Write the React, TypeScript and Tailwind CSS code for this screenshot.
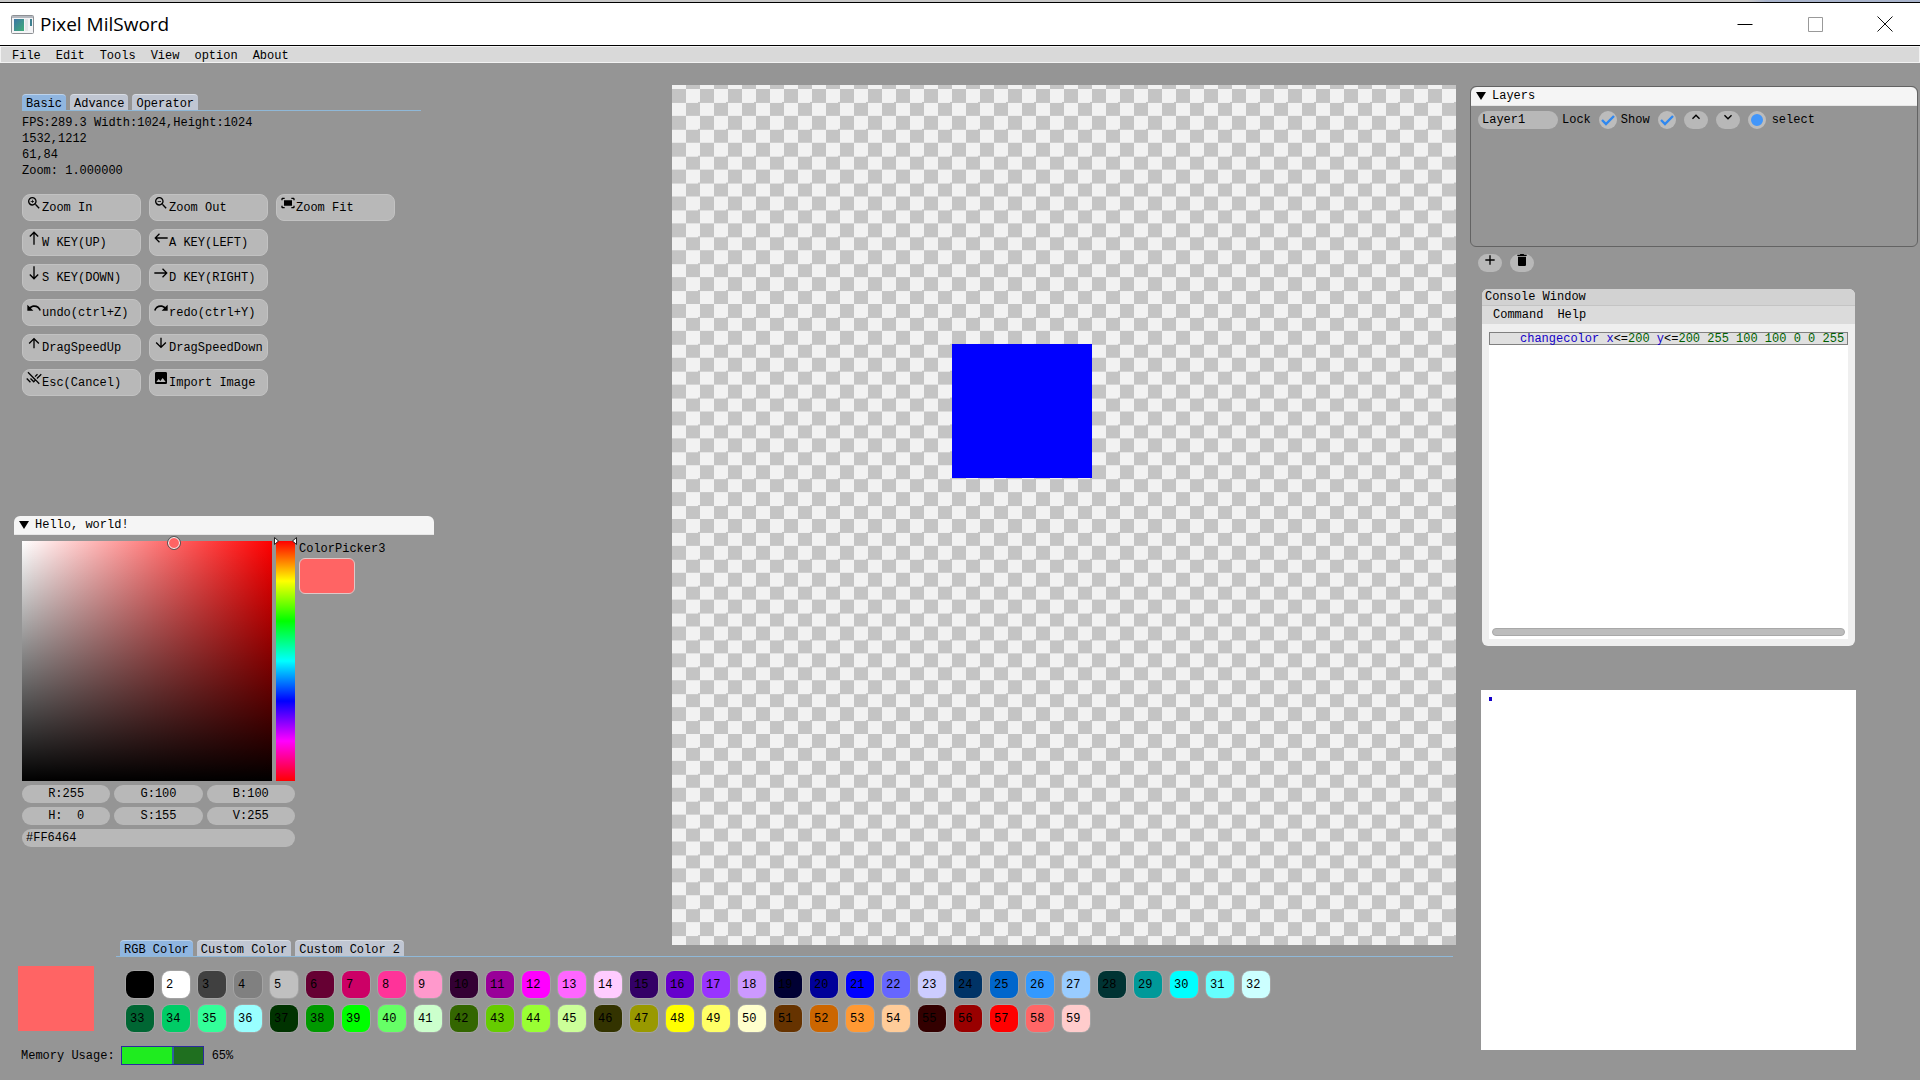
import { useState } from "react";
import type { ReactNode } from "react";
import type { IconType } from "react-icons";
import {
  MdAdd,
  MdArrowDownward,
  MdArrowUpward,
  MdDelete,
  MdEast,
  MdExpandLess,
  MdExpandMore,
  MdFitScreen,
  MdImage,
  MdNorth,
  MdRedo,
  MdRemoveDone,
  MdSouth,
  MdUndo,
  MdWest,
  MdZoomIn,
  MdZoomOut,
} from "react-icons/md";
import { clsx } from "clsx";

const menus = ["File", "Edit", "Tools", "View", "option", "About"];

const actions: { label: string; icon: IconType; newRow?: boolean }[] = [
  { label: "Zoom In", icon: MdZoomIn },
  { label: "Zoom Out", icon: MdZoomOut },
  { label: "Zoom Fit", icon: MdFitScreen },
  { label: "W KEY(UP)", icon: MdNorth, newRow: true },
  { label: "A KEY(LEFT)", icon: MdWest },
  { label: "S KEY(DOWN)", icon: MdSouth, newRow: true },
  { label: "D KEY(RIGHT)", icon: MdEast },
  { label: "undo(ctrl+Z)", icon: MdUndo, newRow: true },
  { label: "redo(ctrl+Y)", icon: MdRedo },
  { label: "DragSpeedUp", icon: MdArrowUpward, newRow: true },
  { label: "DragSpeedDown", icon: MdArrowDownward },
  { label: "Esc(Cancel)", icon: MdRemoveDone, newRow: true },
  { label: "Import Image", icon: MdImage },
];

const palette = [
  "#000000", "#ffffff", "#404040", "#808080", "#c0c0c0", "#660033", "#cc0066", "#ff3399",
  "#ff99cc", "#330033", "#990099", "#ff00ff", "#ff66ff", "#ffccff", "#330066", "#6600cc",
  "#9933ff", "#cc99ff", "#000033", "#000099", "#0000ff", "#6666ff", "#ccccff", "#003366",
  "#0066cc", "#3399ff", "#99ccff", "#003333", "#009999", "#00ffff", "#66ffff", "#ccffff",
  "#006633", "#00cc66", "#33ff99", "#99ffff", "#003300", "#009900", "#00ff00", "#66ff66",
  "#ccffcc", "#336600", "#66cc00", "#99ff33", "#ccff99", "#333300", "#999900", "#ffff00",
  "#ffff66", "#ffffcc", "#663300", "#cc6600", "#ff9933", "#ffcc99", "#330000", "#990000",
  "#ff0000", "#ff6666", "#ffcccc",
];

const channels = [
  { name: "Red", value: "R:255" },
  { name: "Green", value: "G:100" },
  { name: "Blue", value: "B:100" },
  { name: "Hue", value: "H:  0" },
  { name: "Saturation", value: "S:155" },
  { name: "Value", value: "V:255" },
];

function TitleBar() {
  return (
    <header>
      <div className="h-0.5 bg-[linear-gradient(to_right,#c8c8c8_91%,#a9b4cc_92%)]" />
      <div className="flex h-[44px] items-center border-y border-black bg-white">
        <svg className="ml-[11px] h-[19px] w-[23px]" viewBox="0 0 23 19" aria-hidden="true">
          <rect x="0.5" y="0.5" width="22" height="18" rx="1" fill="#f4f4f6" stroke="#8d9094" />
          <rect x="1" y="1" width="21" height="2" fill="#b4b8bf" />
          <defs>
            <linearGradient id="appIcon" x1="0" y1="0" x2="1" y2="1">
              <stop offset="0" stopColor="#3c74a6" />
              <stop offset="1" stopColor="#3fae77" />
            </linearGradient>
          </defs>
          <rect x="3" y="4" width="10" height="12" fill="url(#appIcon)" />
          <rect x="14" y="4" width="3" height="12" fill="#e3e5e8" />
          <rect x="19" y="4" width="2" height="7" fill="#3d8090" />
        </svg>
        <h1 className="ml-1.5 font-['Open_Sans',sans-serif] text-[19px] leading-6">Pixel MilSword</h1>
        <div className="ml-auto flex">
          <button aria-label="Minimize" className="flex w-[70px] justify-center">
            <svg className="size-4" viewBox="0 0 16 16" fill="none" stroke="#000">
              <path d="M0.5 8.5h15" />
            </svg>
          </button>
          <button aria-label="Maximize" className="flex w-[70px] justify-center">
            <svg className="size-4" viewBox="0 0 16 16" fill="none" stroke="#999">
              <path d="M1.5 1.5h14v14h-14z" />
            </svg>
          </button>
          <button aria-label="Close" className="flex w-[70px] justify-center">
            <svg className="size-4" viewBox="0 0 16 16" fill="none" stroke="#111">
              <path d="M0.5 0.5l15 15M15.5 0.5l-15 15" />
            </svg>
          </button>
        </div>
      </div>
    </header>
  );
}

function Tabs({ items, label }: { items: string[]; label: string }) {
  const [active, setActive] = useState(items[0]);
  return (
    <div role="tablist" aria-label={label} className="flex gap-1 border-b border-[#8fb8d8]">
      {items.map((item) => (
        <button
          key={item}
          role="tab"
          aria-selected={item === active}
          onClick={() => setActive(item)}
          className={clsx(
            "h-4 rounded-t-sm border-t border-white/40 px-1 pt-0.5 leading-[14px]",
            item === active ? "bg-[#90b6e0]" : "bg-[#c0c6d2]"
          )}
        >
          {item}
        </button>
      ))}
    </div>
  );
}

function ToolPanel() {
  return (
    <section className="w-[399px]">
      <Tabs items={["Basic", "Advance", "Operator"]} label="Tools" />
      <div className="pt-1 leading-4">
        <p>FPS:289.3 Width:1024,Height:1024</p>
        <p>1532,1212</p>
        <p>61,84</p>
        <p>Zoom: 1.000000</p>
      </div>
      <div className="mt-[15px] grid w-fit grid-cols-3 gap-2">
        {actions.map(({ label, icon: Icon, newRow }) => (
          <button
            key={label}
            className={clsx(
              "flex h-[27px] w-[119px] items-center rounded-lg border border-[#c2c2c2] bg-[#b8b8b8] pl-[3px] whitespace-nowrap hover:bg-[#c6c6c6]",
              newRow && "col-start-1"
            )}
          >
            <Icon className="size-4 shrink-0 self-start" />
            {label}
          </button>
        ))}
      </div>
    </section>
  );
}

function PanelTitle({ children }: { children: ReactNode }) {
  return (
    <h2 className="flex h-[19px] items-center gap-1.5 rounded-t-md border-b border-[#e6e6e6] bg-[#f5f5f5] pl-[5px]">
      <svg className="h-2 w-[10px]" viewBox="0 0 10 8" aria-hidden="true">
        <path d="M0 0h10L5 8z" />
      </svg>
      {children}
    </h2>
  );
}

function ColorPicker() {
  return (
    <section className="w-[420px]">
      <PanelTitle>Hello, world!</PanelTitle>
      <div className="mt-1.5 ml-2 flex gap-[5px]">
        <div className="w-[273px]">
          <div className="flex gap-1">
            <div className="relative h-60 w-[250px] bg-[linear-gradient(to_top,#000,transparent),linear-gradient(to_right,#fff,#f00)]">
              <span className="absolute -top-1 left-[146px] size-3 rounded-full border border-white bg-[#ff6464] outline outline-[#555]" />
            </div>
            <div className="relative h-60 flex-1 bg-[linear-gradient(to_bottom,#f00,#ff0,#0f0,#0ff,#00f,#f0f,#f00)]">
              <svg className="absolute -top-1 -left-0.5 h-2 w-[23px]" viewBox="0 0 23 8" fill="#fff" stroke="#222">
                <path d="M0.5 0.5l4 3.5-4 3.5zM22.5 0.5l-4 3.5 4 3.5z" />
              </svg>
            </div>
          </div>
          <div className="mt-1 grid grid-cols-3 gap-1">
            {channels.map(({ name, value }) => (
              <input
                key={name}
                aria-label={name}
                defaultValue={value}
                className="h-[18px] w-full min-w-0 rounded-full bg-[#b8b8b8] text-center whitespace-pre"
              />
            ))}
            <input
              aria-label="Hex"
              defaultValue="#FF6464"
              className="col-span-3 h-[18px] min-w-0 rounded-full bg-[#b8b8b8] pl-1"
            />
          </div>
        </div>
        <div className="-ml-px leading-[17px]">
          <p>ColorPicker3</p>
          <button
            aria-label="Current color"
            className="block h-9 w-14 rounded-md border border-[#e0c8c8] bg-[#ff6464]"
          />
        </div>
      </div>
    </section>
  );
}

function Canvas() {
  return (
    <section
      aria-label="Canvas"
      className="relative mt-[22px] h-[860px] flex-1 bg-[conic-gradient(#f2f2f2_25%,#c4c4c4_0_50%,#f2f2f2_0_75%,#c4c4c4_0)] bg-[length:calc(100%/28)_calc(100%/32)] bg-[position:0_4px]"
    >
      <div className="absolute top-[259px] left-[280px] h-[134px] w-[140px] bg-[#0000ff]" />
    </section>
  );
}

function ColorBar() {
  return (
    <section className="-mt-[5px] flex pr-[3px] pl-[18px]">
      <div className="mt-[26px] h-[65px] w-[76px] shrink-0 bg-[#ff6464]" />
      <div className="ml-[22px] flex-1">
        <div className="[&>div]:pl-1">
          <Tabs items={["RGB Color", "Custom Color", "Custom Color 2"]} label="Palettes" />
        </div>
        <div className="mt-[14px] ml-[10px] grid w-fit grid-cols-[repeat(32,28px)] gap-x-2 gap-y-[7px]">
          {palette.map((color, i) => (
            <button
              key={i}
              style={{ backgroundColor: color }}
              className="h-[27px] rounded-lg pl-1 text-left shadow-[0_0_0_1px_#a3a3a3]"
            >
              {i + 1}
            </button>
          ))}
        </div>
      </div>
    </section>
  );
}

function MemoryUsage() {
  return (
    <div className="mt-[14px] flex h-[19px] items-center pl-[21px]">
      <span>Memory Usage:</span>
      <div className="mx-1.5 h-[19px] w-[83px] border border-[#2b2b9c] bg-[#1f6f1f]">
        <div className="h-full w-[65%] border-r-2 border-[#2f5f9f] bg-[#1fec1f]" />
      </div>
      <span className="ml-0.5">65%</span>
    </div>
  );
}

function Check({ label }: { label: string }) {
  return (
    <label className="flex items-center">
      <span>{label}</span>
      <span className="relative ml-2 size-[18px]">
        <input type="checkbox" defaultChecked className="peer block size-[18px] appearance-none rounded-full bg-[#bcbcbc]" />
        <svg
          className="pointer-events-none absolute inset-0 hidden size-[18px] peer-checked:block"
          viewBox="0 0 18 18"
          fill="none"
          stroke="#2f88f0"
          strokeWidth="2.4"
        >
          <path d="M3 9l4 4 8-8" />
        </svg>
      </span>
    </label>
  );
}

function IconButton({ icon: Icon, label }: { icon: IconType; label: string }) {
  return (
    <button aria-label={label} className="flex h-[18px] w-6 justify-center rounded-full bg-[#b8b8b8]">
      <Icon className="-mt-0.5 size-4 shrink-0" />
    </button>
  );
}

function Layers() {
  return (
    <section>
      <div className="rounded-md border border-[#636363]">
        <PanelTitle>Layers</PanelTitle>
        <div className="flex h-[140px] items-start pt-[5px] pl-[7px] leading-[18px]">
          <input
            aria-label="Layer name"
            defaultValue="Layer1"
            className="mr-1 h-[18px] w-20 rounded-full bg-[#b8b8b8] pl-1"
          />
          <Check label="Lock" />
          <div className="w-1" />
          <Check label="Show" />
          <div className="ml-2 flex gap-2">
            <IconButton icon={MdExpandLess} label="Move layer up" />
            <IconButton icon={MdExpandMore} label="Move layer down" />
          </div>
          <label className="ml-2 flex items-center gap-1.5">
            <input
              type="radio"
              name="layer"
              defaultChecked
              className="size-[18px] appearance-none rounded-full border-[3px] border-[#bcbcbc] bg-[#bcbcbc] checked:bg-[#4296fa]"
            />
            select
          </label>
        </div>
      </div>
      <div className="mt-[7px] ml-2 flex gap-2">
        <IconButton icon={MdAdd} label="Add layer" />
        <IconButton icon={MdDelete} label="Delete layer" />
      </div>
    </section>
  );
}

function Console() {
  return (
    <section className="mt-[17px] ml-3 w-[373px] overflow-hidden rounded-md bg-[#efefef]">
      <h2 className="h-[17px] border-b border-[#c4c4c4] bg-[#d2d2d2] pl-[3px] leading-4">Console Window</h2>
      <nav className="flex h-[18px] gap-[14px] bg-[#dbdbdb] pl-[11px] leading-[18px]">
        <button>Command</button>
        <button>Help</button>
      </nav>
      <div className="mx-[7px] mt-2 mb-[7px] flex h-[307px] flex-col bg-white">
        <pre className="h-[13px] border border-[#808080] bg-[#e0e0e0] pl-[30px] font-[inherit] leading-[12px] text-[#006000]">
          <span className="text-[#1400c8]">changecolor</span> <span className="text-[#1400c8]">x</span>
          <span className="text-black">&lt;=</span>200 <span className="text-[#1400c8]">y</span>
          <span className="text-black">&lt;=</span>200 255 100 100 0 0 255
        </pre>
        <div className="mx-[3px] mt-auto mb-[3px] h-2 rounded-sm border border-[#a8a8a8] bg-[#bcbcbc]" />
      </div>
    </section>
  );
}

export default function App() {
  return (
    <div className="flex min-h-screen flex-col bg-[#959595] font-['Liberation_Mono',monospace] text-[12px] text-black">
      <TitleBar />
      <nav className="flex h-[17px] gap-[15px] border border-[#f2f2f2] bg-[#d9d9d9] pl-[11px] leading-[18px]">
        {menus.map((item) => (
          <button key={item}>{item}</button>
        ))}
      </nav>
      <main className="flex flex-1">
        <div className="flex-1">
          <div className="flex">
            <div className="w-[672px] pt-[31px] pl-[14px]">
              <div className="pl-2">
                <ToolPanel />
              </div>
              <div className="mt-[120px]">
                <ColorPicker />
              </div>
            </div>
            <Canvas />
          </div>
          <ColorBar />
          <MemoryUsage />
        </div>
        <aside className="w-[464px] pt-[23px] pr-[2px] pl-[14px]">
          <Layers />
          <Console />
          <div className="mt-11 ml-[11px] h-[360px] w-[375px] bg-white pt-[7px] pl-2">
            <div className="h-1 w-[3px] bg-[#1400c8]" />
          </div>
        </aside>
      </main>
    </div>
  );
}
